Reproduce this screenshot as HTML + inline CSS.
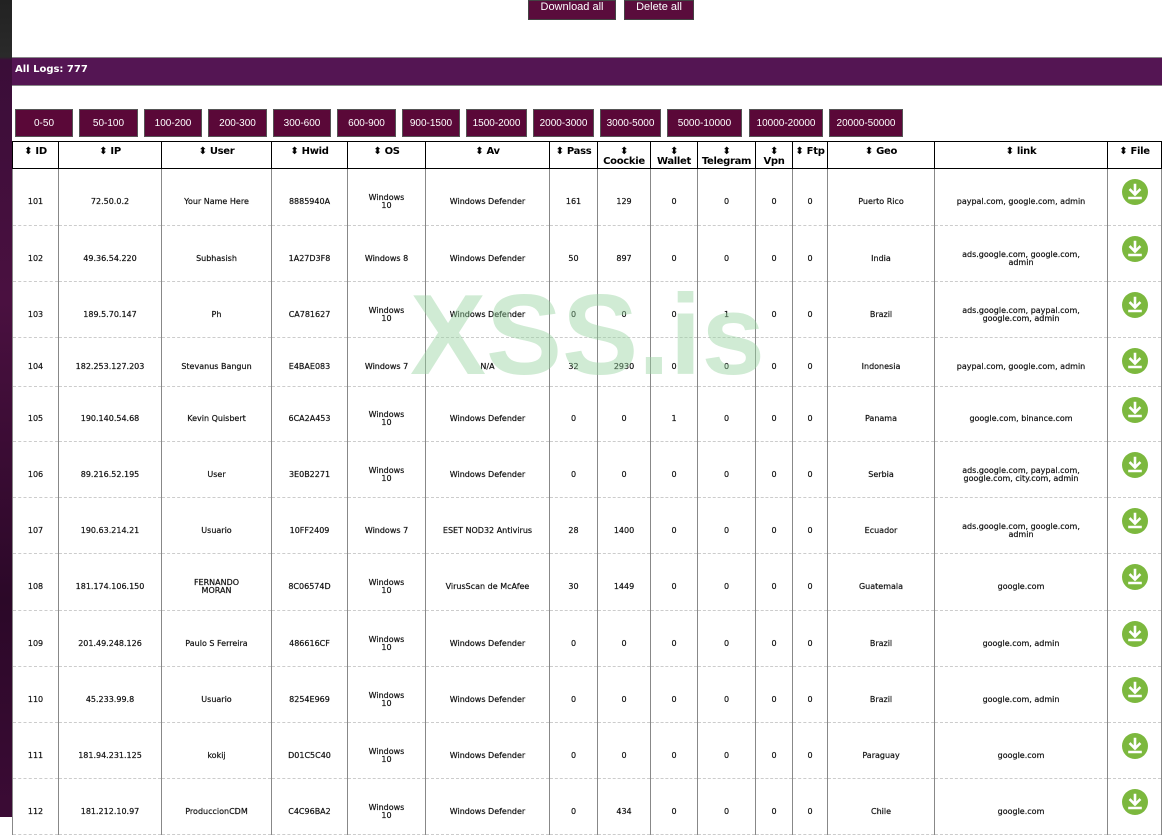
<!DOCTYPE html>
<html><head><meta charset="utf-8">
<style>
*{margin:0;padding:0;box-sizing:border-box}
body{width:1162px;height:817px;overflow:hidden;background:#fff;font-family:"DejaVu Sans",Verdana,sans-serif;position:relative}
.side{position:absolute;left:0;top:0;width:12px;height:817px;background:linear-gradient(180deg,#222 0,#2a2a2a 57px,#3a0d38 60px,#4a1040 300px,#2b0828 600px,#3b0b35 817px)}
.tb{position:absolute;top:0;height:20px;background:#5a0c3c;color:#fff;font:11px "Liberation Sans",Arial,sans-serif;line-height:13px;text-align:center;border:1px solid #444;padding-top:0}
.bar{position:absolute;left:12px;top:57px;width:1150px;height:29px;background:#541553;border-top:1px solid #888;border-bottom:1px solid #888;color:#fff;font:bold 10px "DejaVu Sans",Verdana,sans-serif;padding:6px 0 0 3px}
.rb{position:absolute;top:109px;height:28px;background:#5a0838;border:1px solid #555;color:#fff;font:10px "Liberation Sans",Arial,sans-serif;text-align:center;line-height:27px}
table{position:absolute;left:12px;top:141px;width:1150px;border-collapse:collapse;table-layout:fixed}
th{height:27px;border:1.5px solid #000;font:bold 10px "DejaVu Sans",Verdana,sans-serif;vertical-align:top;padding-top:5px;line-height:10px;text-align:center;letter-spacing:-0.3px}
td{border-left:1px solid #888;border-right:1px solid #888;border-bottom:1px dashed #ccc;font:8px "DejaVu Sans",Verdana,sans-serif;color:#111;text-align:center;vertical-align:middle;padding-top:10px;line-height:8px;-webkit-text-stroke:0.2px #111}
td.f{vertical-align:top;padding-top:10px}
.ic{width:26px;height:26px;border-radius:50%;background:#7cb83e;margin:0 auto;position:relative}
.ic svg{position:absolute;left:0;top:0}
.wm{position:absolute;left:410px;top:270px;font:bold 114px "Liberation Sans",Arial,sans-serif;color:rgba(150,210,160,.45);letter-spacing:0px;pointer-events:none}
</style></head><body>
<div class="side"></div>
<div class="tb" style="left:528px;width:88px">Download all</div>
<div class="tb" style="left:624px;width:70px">Delete all</div>
<div class="bar">All Logs: 777</div>
<div class="rb" style="left:15px;width:58px">0-50</div>
<div class="rb" style="left:79px;width:59px">50-100</div>
<div class="rb" style="left:144px;width:58px">100-200</div>
<div class="rb" style="left:208px;width:59px">200-300</div>
<div class="rb" style="left:273px;width:58px">300-600</div>
<div class="rb" style="left:337px;width:59px">600-900</div>
<div class="rb" style="left:402px;width:58px">900-1500</div>
<div class="rb" style="left:466px;width:61px">1500-2000</div>
<div class="rb" style="left:533px;width:61px">2000-3000</div>
<div class="rb" style="left:600px;width:61px">3000-5000</div>
<div class="rb" style="left:667px;width:75px">5000-10000</div>
<div class="rb" style="left:749px;width:74px">10000-20000</div>
<div class="rb" style="left:829px;width:74px">20000-50000</div>
<table>
<colgroup><col style="width:46px"><col style="width:103px"><col style="width:110px"><col style="width:76px"><col style="width:78px"><col style="width:124px"><col style="width:48px"><col style="width:53px"><col style="width:47px"><col style="width:58px"><col style="width:37px"><col style="width:35px"><col style="width:107px"><col style="width:173px"><col style="width:54px"></colgroup>
<tr><th>⬍ ID</th><th>⬍ IP</th><th>⬍ User</th><th>⬍ Hwid</th><th>⬍ OS</th><th>⬍ Av</th><th>⬍ Pass</th><th>⬍<br>Coockie</th><th>⬍<br>Wallet</th><th>⬍<br>Telegram</th><th>⬍<br>Vpn</th><th>⬍ Ftp</th><th>⬍ Geo</th><th>⬍ link</th><th>⬍ File</th></tr>
<tr style="height:57px"><td>101</td><td>72.50.0.2</td><td>Your Name Here</td><td>8885940A</td><td>Windows<br>10</td><td>Windows Defender</td><td>161</td><td>129</td><td>0</td><td>0</td><td>0</td><td>0</td><td>Puerto Rico</td><td>paypal.com, google.com, admin</td><td class="f"><div class="ic"></div></td></tr>
<tr style="height:56px"><td>102</td><td>49.36.54.220</td><td>Subhasish</td><td>1A27D3F8</td><td>Windows 8</td><td>Windows Defender</td><td>50</td><td>897</td><td>0</td><td>0</td><td>0</td><td>0</td><td>India</td><td>ads.google.com, google.com,<br>admin</td><td class="f"><div class="ic"></div></td></tr>
<tr style="height:56px"><td>103</td><td>189.5.70.147</td><td>Ph</td><td>CA781627</td><td>Windows<br>10</td><td>Windows Defender</td><td>0</td><td>0</td><td>0</td><td>1</td><td>0</td><td>0</td><td>Brazil</td><td>ads.google.com, paypal.com,<br>google.com, admin</td><td class="f"><div class="ic"></div></td></tr>
<tr style="height:49px"><td>104</td><td>182.253.127.203</td><td>Stevanus Bangun</td><td>E4BAE083</td><td>Windows 7</td><td>N/A</td><td>32</td><td>2930</td><td>0</td><td>0</td><td>0</td><td>0</td><td>Indonesia</td><td>paypal.com, google.com, admin</td><td class="f"><div class="ic"></div></td></tr>
<tr style="height:55px"><td>105</td><td>190.140.54.68</td><td>Kevin Quisbert</td><td>6CA2A453</td><td>Windows<br>10</td><td>Windows Defender</td><td>0</td><td>0</td><td>1</td><td>0</td><td>0</td><td>0</td><td>Panama</td><td>google.com, binance.com</td><td class="f"><div class="ic"></div></td></tr>
<tr style="height:56px"><td>106</td><td>89.216.52.195</td><td>User</td><td>3E0B2271</td><td>Windows<br>10</td><td>Windows Defender</td><td>0</td><td>0</td><td>0</td><td>0</td><td>0</td><td>0</td><td>Serbia</td><td>ads.google.com, paypal.com,<br>google.com, city.com, admin</td><td class="f"><div class="ic"></div></td></tr>
<tr style="height:56px"><td>107</td><td>190.63.214.21</td><td>Usuario</td><td>10FF2409</td><td>Windows 7</td><td>ESET NOD32 Antivirus</td><td>28</td><td>1400</td><td>0</td><td>0</td><td>0</td><td>0</td><td>Ecuador</td><td>ads.google.com, google.com,<br>admin</td><td class="f"><div class="ic"></div></td></tr>
<tr style="height:57px"><td>108</td><td>181.174.106.150</td><td>FERNANDO<br>MORAN</td><td>8C06574D</td><td>Windows<br>10</td><td>VirusScan de McAfee</td><td>30</td><td>1449</td><td>0</td><td>0</td><td>0</td><td>0</td><td>Guatemala</td><td>google.com</td><td class="f"><div class="ic"></div></td></tr>
<tr style="height:56px"><td>109</td><td>201.49.248.126</td><td>Paulo S Ferreira</td><td>486616CF</td><td>Windows<br>10</td><td>Windows Defender</td><td>0</td><td>0</td><td>0</td><td>0</td><td>0</td><td>0</td><td>Brazil</td><td>google.com, admin</td><td class="f"><div class="ic"></div></td></tr>
<tr style="height:56px"><td>110</td><td>45.233.99.8</td><td>Usuario</td><td>8254E969</td><td>Windows<br>10</td><td>Windows Defender</td><td>0</td><td>0</td><td>0</td><td>0</td><td>0</td><td>0</td><td>Brazil</td><td>google.com, admin</td><td class="f"><div class="ic"></div></td></tr>
<tr style="height:56px"><td>111</td><td>181.94.231.125</td><td>kokij</td><td>D01C5C40</td><td>Windows<br>10</td><td>Windows Defender</td><td>0</td><td>0</td><td>0</td><td>0</td><td>0</td><td>0</td><td>Paraguay</td><td>google.com</td><td class="f"><div class="ic"></div></td></tr>
<tr style="height:56px"><td>112</td><td>181.212.10.97</td><td>ProduccionCDM</td><td>C4C96BA2</td><td>Windows<br>10</td><td>Windows Defender</td><td>0</td><td>434</td><td>0</td><td>0</td><td>0</td><td>0</td><td>Chile</td><td>google.com</td><td class="f"><div class="ic"></div></td></tr>
</table>
<div class="wm">XSS.is</div>
<script>
document.querySelectorAll('.ic').forEach(function(e){e.innerHTML='<svg width="26" height="26" viewBox="0 0 26 26"><path d="M13 6v9M8.5 11l4.5 4.5 4.5-4.5M7.5 19h11" stroke="#fff" stroke-width="2.6" fill="none" stroke-linecap="square"/></svg>';});
</script>
</body></html>
